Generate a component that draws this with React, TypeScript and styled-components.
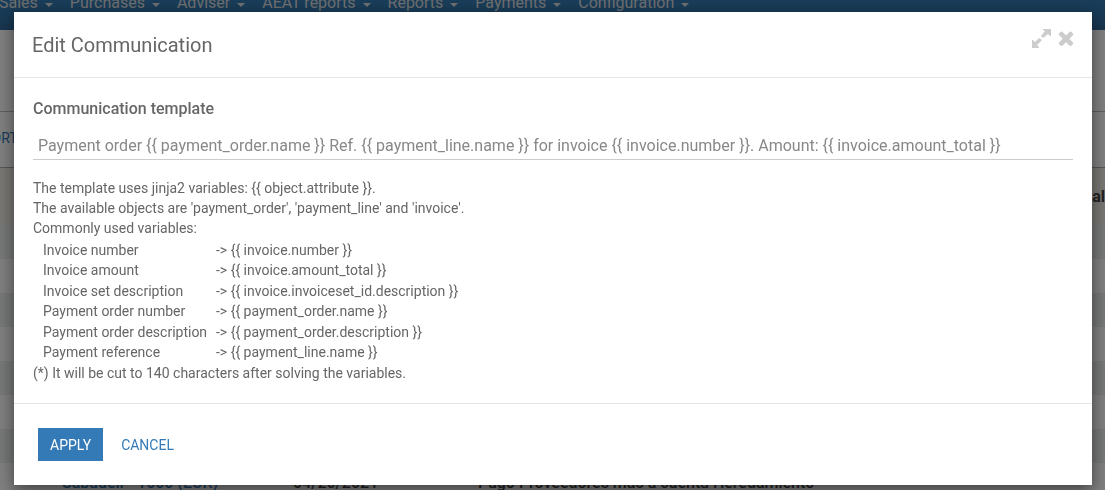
import React from 'react';
import styled, { createGlobalStyle } from 'styled-components';

const GlobalStyle = createGlobalStyle`
  *, *::before, *::after { box-sizing: border-box; }
  body {
    margin: 0;
    overflow: hidden;
    background: #fff;
    color: #666;
    font-family: Roboto, "Liberation Sans", sans-serif;
    font-size: 14px;
  }
`;

const Page = styled.div`
  height: 100vh;
  overflow: hidden;
`;

const NavBar = styled.nav`
  display: flex;
  align-items: flex-start;
  gap: 17px;
  height: 30px;
  margin-left: -1px;
  background: linear-gradient(#347bb4, #2f6c9e);
  white-space: nowrap;
`;

const NavButton = styled.button`
  display: flex;
  align-items: center;
  gap: 7px;
  margin-top: -7px;
  padding: 0;
  border: 0;
  background: none;
  color: #ddd;
  font: 16px/20px Roboto, sans-serif;

  &::after {
    content: '';
    margin-top: 3px;
    border: 4px solid transparent;
    border-top-color: currentColor;
    border-bottom: 0;
  }
`;

const Breadcrumb = styled.div`
  height: 82px;
  border-bottom: 1px solid #bbb;
`;

const Toolbar = styled.div`
  display: flex;
  align-items: center;
  height: 56px;
  padding-bottom: 3px;
  border-bottom: 1px solid #aaa;
`;

const ToolbarLink = styled.a`
  margin-left: -34px;
  color: #337ab7;
  font-size: 14px;
  text-decoration: none;
`;

const OrderTable = styled.table`
  width: 100%;
  border-collapse: collapse;
  table-layout: fixed;
  color: #444;
  font-size: 16px;
  font-weight: 500;
  line-height: 20px;
  white-space: nowrap;

  th {
    height: 57px;
    padding: 0;
    background: #f0eee8;
    font-weight: 700;
    text-align: left;
  }
  th:last-child { text-align: right; }
  td { height: 34px; padding: 5px 0 0; }
  tbody tr:nth-child(odd) { background: #ecefee; }
  a { color: #337ab7; text-decoration: none; }
`;

const Column = styled.col<{ $width?: number }>`
  width: ${({ $width }) => ($width ? `${$width}px` : 'auto')};
`;

const Overlay = styled.div`
  position: fixed;
  inset: 0;
  padding: 12px 13px 5px 14px;
  background: rgba(0, 0, 0, 0.5);
`;

const Dialog = styled.section`
  background: #fff;
  box-shadow: 0 5px 15px rgba(0, 0, 0, 0.5);
`;

const DialogHeader = styled.header`
  display: flex;
  justify-content: space-between;
  align-items: flex-start;
  padding: 15px 15px 14px 18px;
  border-bottom: 1px solid #e5e5e5;
`;

const Title = styled.h1`
  margin: 0;
  font-size: 20px;
  font-weight: 400;
  line-height: 36px;
`;

const HeaderActions = styled.div`
  display: flex;
  gap: 2px;
`;

const IconButton = styled.button`
  display: flex;
  padding: 0;
  border: 0;
  background: none;
  color: #ccc;
  cursor: pointer;
`;

const DialogBody = styled.div`
  padding: 21px 19px 20px;
`;

const FieldLabel = styled.label`
  display: block;
  font-size: 16px;
  font-weight: 500;
  line-height: 20px;
`;

const TextField = styled.input`
  display: block;
  width: 100%;
  height: 28px;
  margin: 13px 0 18px;
  padding: 0 5px;
  border: 0;
  border-bottom: 1px solid #ccc;
  outline: 0;
  background: none;
  color: #888;
  font: 16px Roboto, sans-serif;
`;

const HelpText = styled.p`
  margin: 0;
  font-size: 14px;
  line-height: 20px;
`;

const VariableList = styled.dl`
  display: grid;
  grid-template-columns: 173px 1fr;
  grid-template-rows: repeat(3, 20px 21px);
  margin: 2px 0 0 10px;
  font-size: 14px;
  line-height: 20px;

  dt, dd { margin: 0; white-space: nowrap; }
`;

const DialogFooter = styled.footer`
  display: flex;
  gap: 6px;
  padding: 24px;
  border-top: 1px solid #e5e5e5;
`;

const ActionButton = styled.button<{ $primary?: boolean }>`
  height: 33px;
  padding: 0 12px;
  border: 0;
  background: ${({ $primary }) => ($primary ? '#337ab7' : 'transparent')};
  color: ${({ $primary }) => ($primary ? '#fff' : '#337ab7')};
  font: 14px/20px Roboto, sans-serif;
  text-transform: uppercase;
  cursor: pointer;
`;

const menus = ['Sales', 'Purchases', 'Adviser', 'AEAT reports', 'Reports', 'Payments', 'Configuration'];

const variables = [
  ['Invoice number', 'invoice.number'],
  ['Invoice amount', 'invoice.amount_total'],
  ['Invoice set description', 'invoice.invoiceset_id.description'],
  ['Payment order number', 'payment_order.name'],
  ['Payment order description', 'payment_order.description'],
  ['Payment reference', 'payment_line.name'],
];

const template =
  'Payment order {{ payment_order.name }} Ref. {{ payment_line.name }} for invoice {{ invoice.number }}. Amount: {{ invoice.amount_total }}';

const ExpandIcon = () => (
  <svg width="22" height="22" viewBox="0 0 22 22" fill="currentColor" aria-hidden="true">
    <path d="M12 2h8v7h-1l-2-2-5 4-2-2 4-5-2-1zM1 21v-8h1l2 2 4-4 3 2-5 5 2 2v1z" />
  </svg>
);

const CloseIcon = () => (
  <svg width="22" height="22" viewBox="0 0 1792 1792" fill="currentColor" aria-hidden="true">
    <path d="M1490 1322q0 40-28 68l-136 136q-28 28-68 28t-68-28l-294-294-294 294q-28 28-68 28t-68-28l-136-136q-28-28-28-68t28-68l294-294-294-294q-28-28-28-68t28-68l136-136q28-28 68-28t68 28l294 294 294-294q28-28 68-28t68 28l136 136q28 28 28 68t-28 68l-294 294 294 294q28 28 28 68z" />
  </svg>
);

export default function App() {
  return (
    <>
      <GlobalStyle />
      <Page>
        <NavBar>
          {menus.map((name) => (
            <NavButton key={name}>{name}</NavButton>
          ))}
        </NavBar>
        <Breadcrumb />
        <Toolbar>
          <ToolbarLink href="#export">EXPORT</ToolbarLink>
        </Toolbar>
        <OrderTable>
          <colgroup>
            <Column $width={62} />
            <Column $width={231} />
            <Column $width={185} />
            <Column />
            <Column $width={100} />
          </colgroup>
          <thead>
            <tr><th /><th /><th /><th /><th>Total</th></tr>
          </thead>
          <tbody>
            {Array.from({ length: 7 }, (_, row) => (
              <tr key={row}><td /><td /><td /><td /><td /></tr>
            ))}
            <tr>
              <td />
              <td><a href="#order">Sabadell - 1000 (EUR)</a></td>
              <td>04/20/2021</td>
              <td>Pago Proveedores mas a cuenta Heredamiento</td>
              <td />
            </tr>
          </tbody>
        </OrderTable>
      </Page>
      <Overlay>
        <Dialog role="dialog" aria-modal="true" aria-labelledby="dialog-title">
          <DialogHeader>
            <Title id="dialog-title">Edit Communication</Title>
            <HeaderActions>
              <IconButton aria-label="Expand"><ExpandIcon /></IconButton>
              <IconButton aria-label="Close"><CloseIcon /></IconButton>
            </HeaderActions>
          </DialogHeader>
          <DialogBody>
            <FieldLabel htmlFor="template">Communication template</FieldLabel>
            <TextField id="template" type="text" defaultValue={template} />
            <HelpText>The template uses jinja2 variables: {'{{ object.attribute }}'}.</HelpText>
            <HelpText>The available objects are 'payment_order', 'payment_line' and 'invoice'.</HelpText>
            <HelpText>Commonly used variables:</HelpText>
            <VariableList>
              {variables.map(([label, name]) => (
                <React.Fragment key={name}>
                  <dt>{label}</dt>
                  <dd>{`-> {{ ${name} }}`}</dd>
                </React.Fragment>
              ))}
            </VariableList>
            <HelpText>(*) It will be cut to 140 characters after solving the variables.</HelpText>
          </DialogBody>
          <DialogFooter>
            <ActionButton $primary>Apply</ActionButton>
            <ActionButton>Cancel</ActionButton>
          </DialogFooter>
        </Dialog>
      </Overlay>
    </>
  );
}
